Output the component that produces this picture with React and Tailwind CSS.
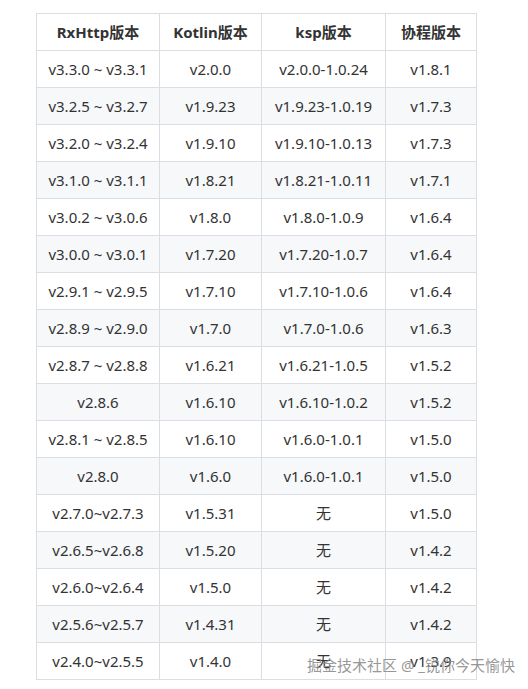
import React from "react";

const rows = [
  ["v3.3.0 ~ v3.3.1", "v2.0.0", "v2.0.0-1.0.24", "v1.8.1"],
  ["v3.2.5 ~ v3.2.7", "v1.9.23", "v1.9.23-1.0.19", "v1.7.3"],
  ["v3.2.0 ~ v3.2.4", "v1.9.10", "v1.9.10-1.0.13", "v1.7.3"],
  ["v3.1.0 ~ v3.1.1", "v1.8.21", "v1.8.21-1.0.11", "v1.7.1"],
  ["v3.0.2 ~ v3.0.6", "v1.8.0", "v1.8.0-1.0.9", "v1.6.4"],
  ["v3.0.0 ~ v3.0.1", "v1.7.20", "v1.7.20-1.0.7", "v1.6.4"],
  ["v2.9.1 ~ v2.9.5", "v1.7.10", "v1.7.10-1.0.6", "v1.6.4"],
  ["v2.8.9 ~ v2.9.0", "v1.7.0", "v1.7.0-1.0.6", "v1.6.3"],
  ["v2.8.7 ~ v2.8.8", "v1.6.21", "v1.6.21-1.0.5", "v1.5.2"],
  ["v2.8.6", "v1.6.10", "v1.6.10-1.0.2", "v1.5.2"],
  ["v2.8.1 ~ v2.8.5", "v1.6.10", "v1.6.0-1.0.1", "v1.5.0"],
  ["v2.8.0", "v1.6.0", "v1.6.0-1.0.1", "v1.5.0"],
  ["v2.7.0~v2.7.3", "v1.5.31", "无", "v1.5.0"],
  ["v2.6.5~v2.6.8", "v1.5.20", "无", "v1.4.2"],
  ["v2.6.0~v2.6.4", "v1.5.0", "无", "v1.4.2"],
  ["v2.5.6~v2.5.7", "v1.4.31", "无", "v1.4.2"],
  ["v2.4.0~v2.5.5", "v1.4.0", "无", "v1.3.9"],
];

const headers = ["RxHttp版本", "Kotlin版本", "ksp版本", "协程版本"];
const widths = ["w-[123px]", "w-[102px]", "w-[124px]", "w-[91px]"];

export default function App() {
  return (
    <div
      className="relative w-[528px] h-[689px] bg-white text-[15px] text-[#333]"
      style={{ fontFamily: '"Noto Sans", "Noto Sans CJK SC", sans-serif' }}
    >
      <div className="pt-[13px] pl-[36px]">
        <table className="border-collapse table-fixed">
          <thead>
            <tr className="bg-white">
              {headers.map((h, i) => (
                <th
                  key={i}
                  className={`${widths[i]} h-[37px] p-0 border border-[#dadde1] font-bold text-center leading-none`}
                >
                  {h}
                </th>
              ))}
            </tr>
          </thead>
          <tbody>
            {rows.map((r, ri) => (
              <tr key={ri} className={ri % 2 === 1 ? "bg-[#f6f8fa]" : "bg-white"}>
                {r.map((c, ci) => (
                  <td
                    key={ci}
                    className="h-[37px] p-0 border border-[#dadde1] text-center leading-none"
                  >
                    {c}
                  </td>
                ))}
              </tr>
            ))}
          </tbody>
        </table>
      </div>
      <div className="absolute left-[307px] top-[654px] text-[15px] leading-[22px] text-[#8a8a8a]/90 whitespace-nowrap">
        掘金技术社区 @ _锐你今天愉快
      </div>
    </div>
  );
}
